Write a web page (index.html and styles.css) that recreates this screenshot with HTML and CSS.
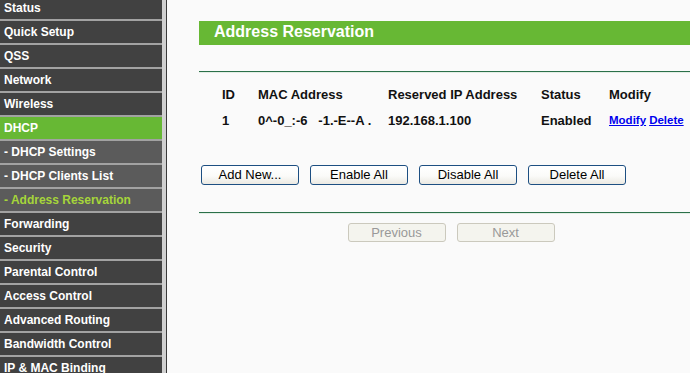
FILE: index.html
```html
<!DOCTYPE html>
<html>
<head>
<meta charset="utf-8">
<link rel="stylesheet" href="styles.css">
</head>
<body>
<div class="page">
  <nav class="sidebar">
    <ul class="menu">
      <li class="item">Status</li>
      <li class="item">Quick Setup</li>
      <li class="item">QSS</li>
      <li class="item">Network</li>
      <li class="item">Wireless</li>
      <li class="item active">DHCP</li>
      <li class="item sub">- DHCP Settings</li>
      <li class="item sub">- DHCP Clients List</li>
      <li class="item sub sub-active">- Address Reservation</li>
      <li class="item">Forwarding</li>
      <li class="item">Security</li>
      <li class="item">Parental Control</li>
      <li class="item">Access Control</li>
      <li class="item">Advanced Routing</li>
      <li class="item">Bandwidth Control</li>
      <li class="item">IP &amp; MAC Binding</li>
    </ul>
  </nav>
  <main class="main">
    <div class="content">
      <h1 class="title">Address Reservation</h1>
      <div class="rule rule-top"></div>
      <div class="table">
        <div class="row head">
          <span>ID</span><span>MAC Address</span><span>Reserved IP Address</span><span>Status</span><span>Modify</span>
        </div>
        <div class="row">
          <span>1</span><span class="mac">0^-0_:-6&nbsp;&nbsp; -1.-E--A .</span><span>192.168.1.100</span><span>Enabled</span><span class="links"><a href="#" class="link">Modify</a> <a href="#" class="link">Delete</a></span>
        </div>
      </div>
      <div class="actions">
        <button class="btn">Add New...</button>
        <button class="btn">Enable All</button>
        <button class="btn">Disable All</button>
        <button class="btn">Delete All</button>
      </div>
      <div class="rule rule-bottom"></div>
      <div class="pager">
        <button class="btn disabled" disabled>Previous</button>
        <button class="btn disabled" disabled>Next</button>
      </div>
    </div>
  </main>
</div>
</body>
</html>
```
FILE: styles.css
```css
html, body {
  margin: 0;
  padding: 0;
  height: 100%;
  overflow: hidden;
  background: #fafafa;
}

.page {
  display: flex;
  height: 373px;
  font-family: "Liberation Sans", Arial, sans-serif;
}

.sidebar {
  width: 162px;
  flex: none;
  background: #414141;
  border-right: 4px solid #d0d0d0;
  box-shadow: 1px 0 0 #3a3a3a;
  overflow: hidden;
}

.menu {
  list-style: none;
  margin: -3px 0 0 0;
  padding: 0;
}

.item {
  height: 22px;
  line-height: 22px;
  border-bottom: 2px solid #a2a2a2;
  padding-left: 4px;
  color: #ffffff;
  font-weight: bold;
  font-size: 12px;
  background: #414141;
  white-space: nowrap;
}

.item.active {
  background: #67b834;
}

.item.sub {
  background: #5b5b5b;
}

.item.sub-active {
  color: #a6d53a;
}

.main {
  flex: 1;
  margin-left: 1px;
  padding: 21px 0 0 32px;
  background: #fafafa;
  overflow: hidden;
}

.content {
  width: 504px;
}

.title {
  margin: 0;
  height: 24px;
  line-height: 22px;
  padding-left: 15px;
  background: #67b834;
  color: #ffffff;
  font-size: 16px;
  font-weight: bold;
  width: 520px;
}

.rule {
  height: 1px;
  background: #2b7049;
  border-bottom: 1px solid #e3eee5;
  width: 520px;
}

.rule-top {
  margin-top: 26px;
}

.table {
  margin: 8px 0 0 23px;
}

.row {
  display: grid;
  grid-template-columns: 36px 130px 153px 68px auto;
  height: 26px;
  align-items: center;
  font-size: 13px;
  font-weight: bold;
  color: #111111;
  white-space: nowrap;
}

.mac {
  white-space: pre;
}

.links {
  font-size: 11px;
}

.link {
  color: #0000ee;
  text-decoration: underline;
  font-size: 11.5px;
}

.actions {
  display: flex;
  gap: 11px;
  margin: 32px 0 0 2px;
}

.btn {
  width: 98px;
  height: 20px;
  padding: 0;
  border: 1px solid #1d4f82;
  border-radius: 3px;
  background: linear-gradient(#ffffff 0%, #fbfbf9 55%, #ebe9e2 100%);
  font-family: "Liberation Sans", Arial, sans-serif;
  font-size: 13px;
  color: #000000;
  line-height: 18px;
}

.rule-bottom {
  margin-top: 27px;
}

.pager {
  display: flex;
  justify-content: center;
  gap: 11px;
  margin-top: 9px;
}

.btn.disabled {
  height: 19px;
  border-color: #cbc9bd;
  background: #f4f4ee;
  color: #999999;
}
```
